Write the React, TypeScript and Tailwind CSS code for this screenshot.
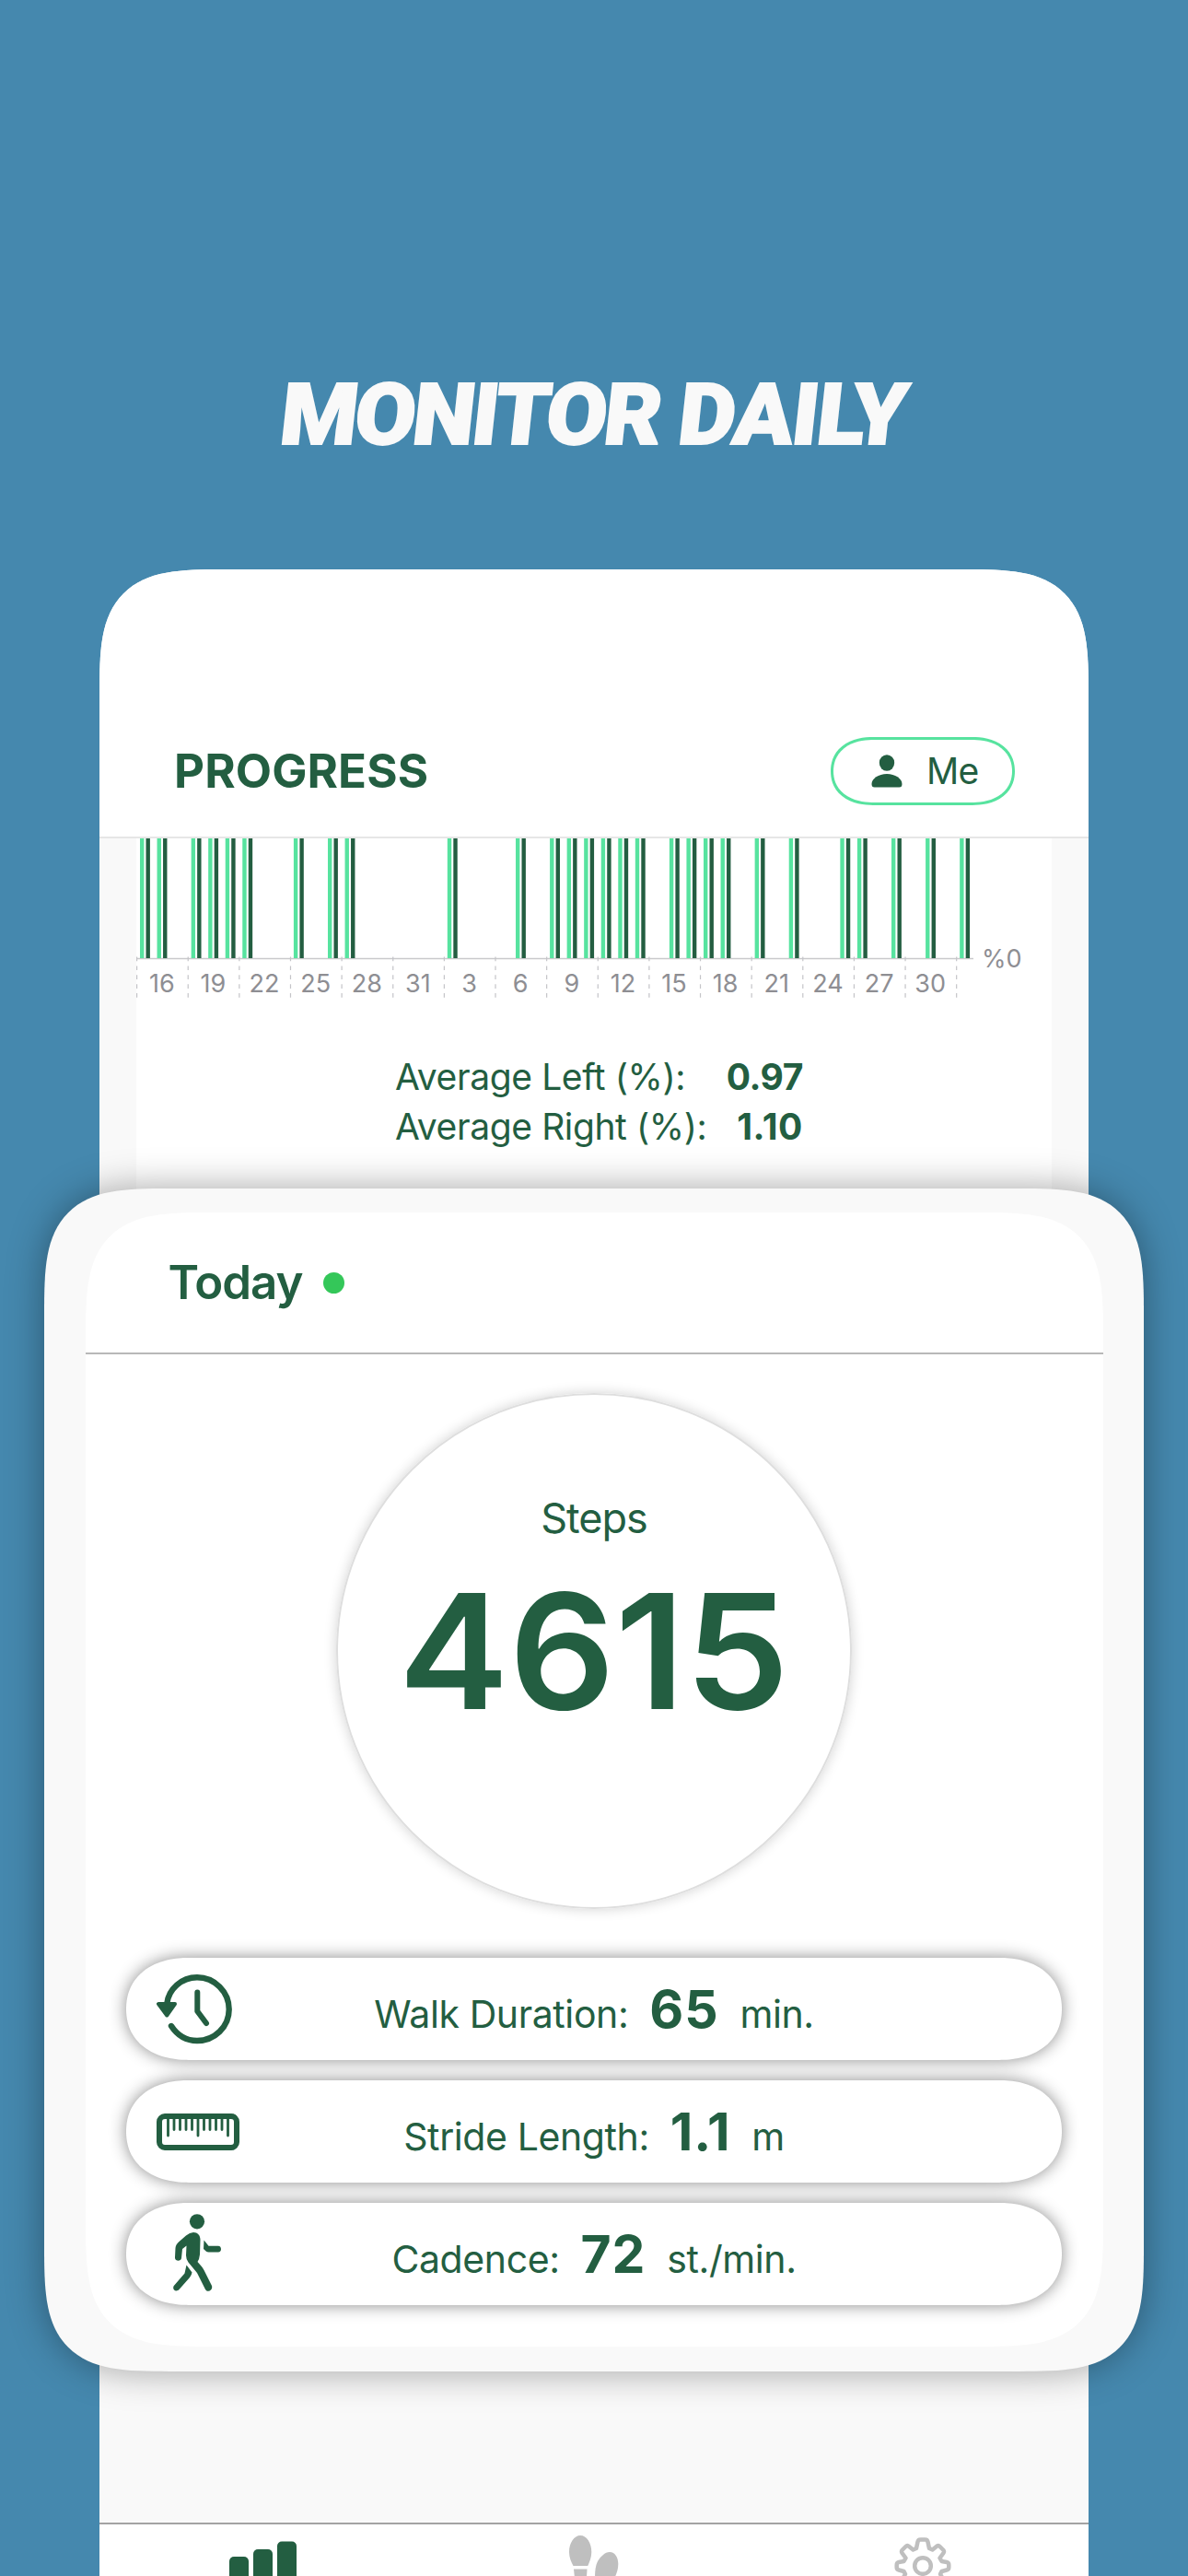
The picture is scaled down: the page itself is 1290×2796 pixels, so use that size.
import clsx from 'clsx'

// days that have a measurement, counted from the left edge of the chart
const DAYS = [
  0, 1, 3, 4, 5, 6, 9, 11, 12, 18, 22, 24, 25, 26, 27, 28, 29, 31, 32, 33, 34,
  36, 38, 41, 42, 44, 46, 48,
]
const LABELS = [16, 19, 22, 25, 28, 31, 3, 6, 9, 12, 15, 18, 21, 24, 27, 30]
const DAY_WIDTH = 18.545

const ClockIcon = () => (
  <svg width="82" height="76" viewBox="0 0 82 76" fill="none">
    <path
      d="M11.2 32C13 16 27 3.3 44 3.3C63 3.3 78.7 19 78.7 38C78.7 57 63 72 44 72C32.500 72 22.500 66 16 56"
      stroke="#235e41"
      strokeWidth="6.400"
      strokeLinecap="round"
    />
    <path
      d="M2 32H20L11.200 44.500Z"
      fill="#235e41"
      stroke="#235e41"
      strokeWidth="4"
      strokeLinejoin="round"
    />
    <path
      d="M44.300 19.500V40L54 53"
      stroke="#235e41"
      strokeWidth="6"
      strokeLinecap="round"
      strokeLinejoin="round"
    />
  </svg>
)

const RulerIcon = () => (
  <svg width="90" height="40" viewBox="0 0 90 40" fill="none">
    <rect x="3" y="3" width="84" height="34" rx="6" stroke="#235e41" strokeWidth="6" />
    <path
      d="M12.500 4V24M45 4V24M77.500 4V24M19 4V17.500M25.500 4V17.500M32 4V17.500M38.500 4V17.500M51.500 4V17.500M58 4V17.500M64.500 4V17.500M71 4V17.500"
      stroke="#235e41"
      strokeWidth="2.800"
      strokeLinecap="round"
    />
  </svg>
)

const WalkIcon = () => (
  <svg className="-mt-[3px]" width="53" height="84" viewBox="0 0 53 84" fill="#235e41">
    <circle cx="26" cy="8.300" r="8.100" />
    <path d="M22 20C26.500 20 29.500 23 29.500 28L29 44Q28.500 49 26.500 52L30 56Q32 58 33.500 61L42 78C43.500 83 37.500 86 35 82L26 64L16.500 52.500Q14 49 14 45L14.500 34.500L10 38L9 48C8.500 52 1.500 51.500 2 47L2.500 37C2.700 34.500 4 32.500 6 30.500L14 23.500Q18 20 22 20Z" />
    <path d="M33.500 28.500L38.500 34.700H49C53 34.700 53 41.600 49 41.600H38.500Q37 41.600 36 40.800L33 38Z" />
    <path d="M14.500 55.500L20.500 63.500Q20 66.500 18 69L6.500 82C3 85.500 -1.500 82 0.800 78L12.500 64.500Q13.500 60 14.500 55.500Z" />
  </svg>
)

const STATS = [
  { label: 'Walk Duration:', value: '65', unit: 'min.', icon: <ClockIcon /> },
  { label: 'Stride Length:', value: '1.1', unit: 'm', icon: <RulerIcon /> },
  {
    label: 'Cadence:',
    value: '72',
    unit: 'st./min.',
    icon: <WalkIcon />,
    inset: true,
  },
]

const Header = () => (
  <header className="flex h-[292px] items-end justify-between border-b-2 border-[#e6e6e6] bg-white pr-20 pb-[34px] pl-[81px]">
    <h2 className="text-[51px] leading-[74px] font-bold tracking-[0.1px]">
      PROGRESS
    </h2>
    <button className="flex h-[74px] w-[200px] items-center rounded-[46px/37px] border-3 border-[#57e39f] pl-[41px] [corner-shape:superellipse(1.15)]">
      <svg width="34" height="36" viewBox="0 0 34 36" fill="#235e41">
        <ellipse cx="17" cy="9" rx="8.200" ry="8.700" />
        <path d="M0.500 32C0.500 26 8 21 17 21S33.500 26 33.500 32Q33.500 35.500 30.500 35.500H3.500Q0.500 35.500 0.500 32Z" />
      </svg>
      <span className="ml-[26px] text-[39px] tracking-[-0.8px]">Me</span>
    </button>
  </header>
)

const Chart = () => (
  <div className="flex text-[27px] leading-none text-[#8e8e93]">
    <div>
      <svg width="910" height="173" viewBox="0 0 910 173">
        <path d="M0 130.500H909" stroke="#c9c9cb" strokeWidth="1.500" />
        {DAYS.map((day) => (
          <g key={day}>
            <rect x={4 + day * DAY_WIDTH} y="-1" width="4.400" height="131" fill="#57e39f" />
            <rect x={10.500 + day * DAY_WIDTH} y="-1" width="4.400" height="131" fill="#235e41" />
          </g>
        ))}
        {[...LABELS, 0].map((_, i) => (
          <path
            key={i}
            d={`M${0.600 + i * 55.63} 128.500V173`}
            stroke="#c4c4c8"
            strokeWidth="1.200"
            strokeDasharray="4.700 5.200"
          />
        ))}
      </svg>
      <div className="-mt-[29px] flex w-[890px]">
        {LABELS.map((label) => (
          <span key={label} className="flex-1 text-center">
            {label}
          </span>
        ))}
      </div>
    </div>
    <span className="mt-[117px] ml-[8px]">%0</span>
  </div>
)

const Averages = () => (
  <dl className="mt-[61px] ml-[281px] w-[443px] text-[39px] leading-[53.5px] tracking-[-0.4px]">
    <div className="flex justify-between">
      <dt>Average Left (%):</dt>
      <dd className="font-bold">0.97</dd>
    </div>
    <div className="flex justify-between">
      <dt>Average Right (%):</dt>
      <dd className="font-bold tracking-[0.6px]">1.10</dd>
    </div>
  </dl>
)

const TabBar = () => (
  <nav className="flex h-[58px] border-t-2 border-[#a3a3a3] bg-white">
    <div className="flex-1">
      <svg className="mt-[18px] ml-[141px]" width="74" height="38" viewBox="0 0 74 38" fill="#235e41">
        <rect x="0" y="17" width="21" height="40" rx="5" />
        <rect x="26" y="9" width="21" height="40" rx="5" />
        <rect x="52" y="0.500" width="21" height="50" rx="5" />
      </svg>
    </div>
    <div className="flex flex-1 justify-center">
      <svg className="mt-[12px]" width="54" height="44" viewBox="0 0 54 44" fill="#bfbfbf">
        <path d="M12.200 0C19 0 24.300 8 24.300 18C24.300 24 22 29 20.300 33H4.500C2.300 29 0 24 0 18C0 8 5.500 0 12.200 0Z" />
        <path d="M5 36.500H19.500L19 46H6Z" />
        <path d="M44 18C50 18 53.300 24 53.300 31C53.300 37 51.500 41 49.500 46H28C28 40 28.500 33 31 28C34 23 39 18 44 18Z" />
      </svg>
    </div>
    <div className="flex-1">
      <svg className="mt-[14px] ml-[147px]" width="62" height="42" viewBox="0 0 62 42" fill="none" stroke="#bfbfbf" strokeWidth="4.500">
        <path
          strokeLinejoin="round"
          d="M28.500 2.500H33.500Q36 2.500 36.500 5L38 12L41.500 13.500L46.500 9.500Q48 8.500 49.500 10L53.500 14Q54.500 15.500 53.500 17L49.500 22.500L51.500 26L57 27Q59.300 27.500 59.300 30V32.500Q59.300 35 57 35.500L51.500 37L50 40L54 47L48 54L40 49L38 58H24L22 49L14 54L8 47L12 40L10.500 37L5 35.500Q2.700 35 2.700 32.500V30Q2.700 27.500 5 27L10.500 26L12.500 22.500L8.500 17Q7.500 15.500 8.500 14L12.500 10Q14 8.500 15.500 9.500L20.500 13.500L24 12L25.500 5Q26 2.500 28.500 2.500Z"
        />
        <circle cx="31" cy="31" r="8.800" />
      </svg>
    </div>
  </nav>
)

const TodayCard = () => (
  <section className="absolute top-[1290px] left-12 h-[1284px] w-[1194px] rounded-[136px] bg-[#f9f9f9] px-[44.5px] pt-[26px] shadow-[0_0_40px_rgba(0,0,0,0.36)] [corner-shape:superellipse(1.7)]">
    <div className="flex h-[1231px] flex-col items-center rounded-[136px] bg-white [corner-shape:superellipse(1.7)]">
      <div className="flex h-[154px] w-full items-center border-b-2 border-[#b8b8b8] pl-[90px]">
        <h2 className="-mt-[2px] text-[51px] leading-none font-semibold tracking-[-1px]">
          Today
        </h2>
        <span className="ml-[22px] size-[23px] rounded-full bg-[#34c759]" />
      </div>
      <div className="mt-[42px] flex size-[560px] flex-col items-center rounded-full border-2 border-[#dedede] pt-[107px] shadow-[0_0_14px_rgba(0,0,0,0.18)]">
        <span className="text-[45px] leading-[54px] tracking-[-1px]">
          Steps
        </span>
        <span className="mt-[14px] scale-x-104 text-[173px] leading-[206px] font-semibold">
          4615
        </span>
      </div>
      <div className="mt-[53px] flex w-[1016px] flex-col gap-[22px]">
        {STATS.map((stat) => (
          <div
            key={stat.label}
            className="grid h-[111px] grid-cols-[1fr_auto_1fr] items-center rounded-[68px/55.5px] bg-white shadow-[0_0_18px_rgba(0,0,0,0.46)] [corner-shape:superellipse(1.15)]"
          >
            <span className={clsx(stat.inset ? 'pl-[51px]' : 'pl-[33px]')}>
              {stat.icon}
            </span>
            <p className="flex items-baseline text-[41px] leading-none tracking-[-0.4px]">
              <span>{stat.label}</span>
              <b className="mx-[23px] text-[57px] font-bold tracking-[0.8px]">
                {stat.value}
              </b>
              <span>{stat.unit}</span>
            </p>
          </div>
        ))}
      </div>
    </div>
  </section>
)

export default function App() {
  return (
    <div className="relative flex h-[2796px] w-[1290px] flex-col items-center overflow-hidden bg-[#4588ae] font-['Inter','Liberation_Sans',sans-serif] text-[#235e41]">
      <h1 className="mt-[395px] h-[223px] origin-top translate-x-[6px] -skew-x-6 scale-x-103 font-['Roboto'] text-[93px] leading-[112px] font-black tracking-[-2.5px] whitespace-nowrap text-[#f9f9f9] [-webkit-text-stroke:2px_#f9f9f9]">
        <span className="tracking-[-3px]">MONITOR</span>{' '}
        <span className="tracking-[-1.5px]">DAILY</span>
      </h1>
      <main className="flex w-[1074px] flex-1 flex-col overflow-hidden rounded-t-[136px] bg-[#f9f9f9] [corner-shape:superellipse(1.7)]">
        <Header />
        <div className="mx-10 h-[400px] bg-white">
          <Chart />
          <Averages />
        </div>
        <div className="flex-1" />
        <TabBar />
      </main>
      <TodayCard />
    </div>
  )
}
